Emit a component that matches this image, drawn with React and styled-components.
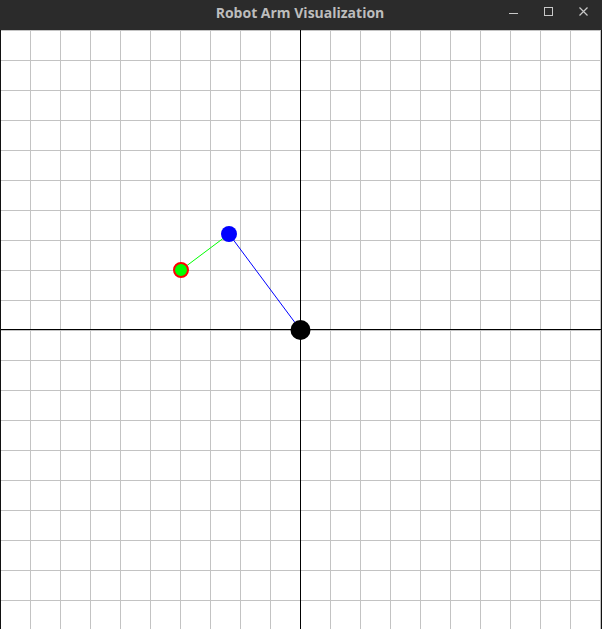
import React from "react";
import styled, { createGlobalStyle } from "styled-components";

const GlobalStyle = createGlobalStyle`
  html, body {
    margin: 0;
    padding: 0;
    overflow: hidden;
    background: #ffffff;
  }
`;

const Window = styled.div`
  width: 602px;
  height: 629px;
  display: flex;
  flex-direction: column;
  background: #2b2b2b;
  overflow: hidden;
`;

const TitleBar = styled.div`
  height: 30px;
  flex: none;
  position: relative;
  display: flex;
  align-items: center;
  justify-content: center;
  background: #2b2b2b;
`;

const Title = styled.span`
  font-family: "Open Sans", "DejaVu Sans", sans-serif;
  font-weight: 700;
  font-size: 14px;
  color: #bdbdbd;
  margin-top: -6px;
  margin-left: -2px;
`;

const Controls = styled.div`
  position: absolute;
  right: 14px;
  top: 7px;
  display: flex;
  gap: 26px;
`;

const ControlButton = styled.div`
  width: 9px;
  height: 9px;
  display: flex;
  color: #c8c8c8;
`;

const Canvas = styled.div`
  flex: 1;
  background: #ffffff;
  border-left: 1px solid #111111;
  border-right: 1px solid #111111;
  overflow: hidden;
`;

const GRID = 30;
const ticks = Array.from({ length: 21 }, (_, i) => i * GRID);

const base = { x: 300.5, y: 300 };
const elbow = { x: 229, y: 204 };
const tip = { x: 181, y: 240 };

const Minimize = () => (
  <svg width="9" height="9" viewBox="0 0 9 9">
    <rect x="0" y="6" width="9" height="1" fill="currentColor" />
  </svg>
);

const Maximize = () => (
  <svg width="9" height="9" viewBox="0 0 9 9">
    <rect x="0.5" y="0.5" width="8" height="8" fill="none" stroke="currentColor" />
  </svg>
);

const Close = () => (
  <svg width="9" height="9" viewBox="0 0 9 9">
    <path d="M0.5 0.5 L8.5 8.5 M8.5 0.5 L0.5 8.5" stroke="currentColor" strokeWidth="1.2" />
  </svg>
);

export default function App() {
  return (
    <>
      <GlobalStyle />
      <Window>
        <TitleBar>
          <Title>Robot Arm Visualization</Title>
          <Controls>
            <ControlButton>
              <Minimize />
            </ControlButton>
            <ControlButton>
              <Maximize />
            </ControlButton>
            <ControlButton>
              <Close />
            </ControlButton>
          </Controls>
        </TitleBar>
        <Canvas>
          <svg width="600" height="600" viewBox="1 0 600 600" style={{ display: "block" }}>
            {ticks.map((t) => (
              <g key={t} shapeRendering="crispEdges">
                <rect x={t} y={0} width={1} height={600} fill="#c3c3c3" />
                <rect x={0} y={t} width={602} height={1} fill="#c3c3c3" />
              </g>
            ))}
            <rect x={300} y={0} width={1} height={600} fill="#000" shapeRendering="crispEdges" />
            <rect x={0} y={299} width={602} height={1} fill="#000" shapeRendering="crispEdges" />

            <line x1={base.x} y1={base.y} x2={elbow.x} y2={elbow.y} stroke="#0000ff" strokeWidth="1" />
            <line x1={elbow.x} y1={elbow.y} x2={tip.x} y2={tip.y} stroke="#00ff00" strokeWidth="1" />

            <circle cx={base.x} cy={base.y} r="10" fill="#000" />
            <circle cx={elbow.x} cy={elbow.y} r="8" fill="#0000ff" />
            <circle cx={tip.x} cy={tip.y} r="7" fill="#00ff00" stroke="#ff0000" strokeWidth="2" />
          </svg>
        </Canvas>
      </Window>
    </>
  );
}
